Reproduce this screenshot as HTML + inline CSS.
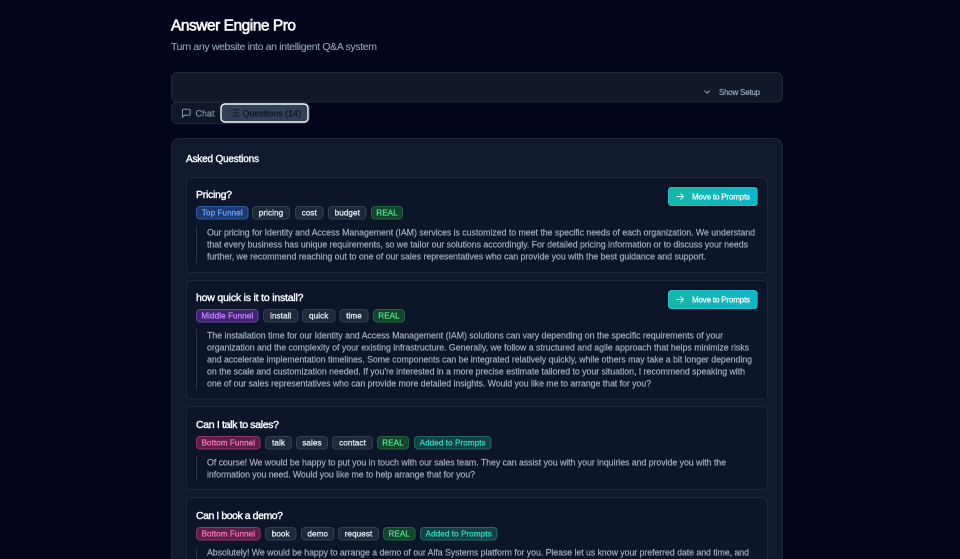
<!DOCTYPE html>
<html lang="en"><head><meta charset="utf-8"><title>Answer Engine Pro</title>
<style>
html,body{margin:0;padding:0;background:#01041a;width:960px;height:559px;overflow:hidden}
svg{display:block;font-family:"Liberation Sans",sans-serif}
.a{font-size:8.8px;fill:#a6b1c4;stroke:#a6b1c4;stroke-width:.16px}
.q{font-size:10.5px;fill:#f8fafc;stroke:#f8fafc;stroke-width:.4px}
.t{font-size:8.1px;text-anchor:middle;letter-spacing:.08px;stroke-width:.3px}
.g{fill:#1e293b;stroke:#334155;rx:3.5px}
.gt{fill:#e2e8f0;stroke:#e2e8f0}
.real{fill:#14432f;stroke:#22633f;rx:3.5px}.realt{fill:#4ade80;stroke:#4ade80}
.add{fill:#134045;stroke:#1f6a68;rx:3.5px}.addt{fill:#2dd4bf;stroke:#2dd4bf}
.top{fill:#1e3a6e;stroke:#2f5aa8;rx:3.5px}.topt{fill:#60a5fa;stroke:#60a5fa}
.mid{fill:#3f2470;stroke:#6b3fb0;rx:3.5px}.midt{fill:#c084fc;stroke:#c084fc}
.bot{fill:#5c1f4a;stroke:#93306f;rx:3.5px}.bott{fill:#f472b6;stroke:#f472b6}
.card{fill:#0d1528;stroke:#1e293b}
.b{font-size:8px;fill:#f0fdfa;stroke:#f0fdfa;stroke-width:.3px}
</style></head><body>
<svg width="960" height="559" viewBox="0 0 960 559" xmlns="http://www.w3.org/2000/svg">
<defs><linearGradient id="tg" x1="0" y1="0" x2="1" y2="0"><stop offset="0" stop-color="#14b8a6"/><stop offset="1" stop-color="#0fb5c9"/></linearGradient></defs>
<rect width="960" height="559" fill="#01041a"/>
<text x="171" y="30.500" font-size="15.500" fill="#fff" stroke="#fff" stroke-width=".6" textLength="125" lengthAdjust="spacing">Answer Engine Pro</text>
<text x="171" y="50" font-size="10.500" fill="#94a3b8" stroke="#94a3b8" stroke-width=".1" textLength="206" lengthAdjust="spacing">Turn any website into an intelligent Q&amp;A system</text>

<rect x="171.500" y="72.500" width="611" height="29.500" rx="6" fill="#111827" stroke="#1f2a3c"/>
<path d="M704.500 90.500l2.700 2.700 2.700-2.700" fill="none" stroke="#94a3b8" stroke-width="1"/>
<text x="719" y="95" font-size="8" fill="#94a3b8" stroke="#94a3b8" stroke-width=".25" textLength="41" lengthAdjust="spacing">Show Setup</text>

<rect x="171.500" y="102.500" width="138" height="21" rx="5" fill="#0f1729" stroke="#1e293b"/>
<path d="M182.500 110.200a1 1 0 0 1 1-1h5.600a1 1 0 0 1 1 1v4a1 1 0 0 1-1 1h-4.400l-2.200 1.800z" fill="none" stroke="#94a3b8" stroke-width=".9"/>
<text x="195.500" y="116.500" font-size="8.800" fill="#7f8ca1" stroke="#7f8ca1" stroke-width=".25" textLength="19" lengthAdjust="spacing">Chat</text>
<rect x="221" y="104" width="87" height="18" rx="4" fill="#334155" stroke="#f8fafc" stroke-width="1.400"/>
<path d="M232.500 110h6.500M232.500 113h6.500M232.500 116h6.500" stroke="#0f172a" stroke-width=".9"/>
<path d="M229.500 110h1M229.500 113h1M229.500 116h1" stroke="#0f172a" stroke-width=".9"/>
<text x="242.500" y="116.500" font-size="8.800" fill="#0f172a" stroke="#0f172a" stroke-width=".3" textLength="58.500" lengthAdjust="spacing">Questions (14)</text>

<path d="M171.500 559V146.500a8 8 0 0 1 8-8h595a8 8 0 0 1 8 8V559" fill="#111a2c" stroke="#1f2a3c"/>
<text x="186" y="162" font-size="10" fill="#f8fafc" stroke="#f8fafc" stroke-width=".4" textLength="73" lengthAdjust="spacing">Asked Questions</text>

<!-- Card 1 -->
<rect x="186.500" y="177.500" width="581" height="95" rx="4" class="card"/>
<text x="196" y="198" class="q" textLength="36" lengthAdjust="spacing">Pricing?</text>
<rect x="196.500" y="206.500" width="51.500" height="12.500" rx="3" class="top"/><text x="222.300" y="215.700" class="t topt">Top Funnel</text>
<rect x="252.500" y="206.500" width="37" height="12.500" rx="3" class="g"/><text x="271" y="215.700" class="t gt">pricing</text>
<rect x="295.500" y="206.500" width="27.500" height="12.500" rx="3" class="g"/><text x="309.300" y="215.700" class="t gt">cost</text>
<rect x="328.500" y="206.500" width="37.500" height="12.500" rx="3" class="g"/><text x="347.300" y="215.700" class="t gt">budget</text>
<rect x="371.500" y="206.500" width="31" height="12.500" rx="3" class="real"/><text x="387" y="215.700" class="t realt">REAL</text>
<rect x="666.800" y="185.800" width="92" height="21.400" rx="4" fill="#060b1c"/>
<rect x="668.300" y="187.300" width="89" height="18.400" rx="3" fill="url(#tg)" stroke="#22c3d8" stroke-width=".7"/>
<path d="M676.500 196.500h7M680.500 193.500l3 3-3 3" fill="none" stroke="#f0fdfa" stroke-width="1"/>
<text x="692" y="199.500" class="b" textLength="58" lengthAdjust="spacing">Move to Prompts</text>
<rect x="196" y="226" width="1" height="37" fill="#2b3648"/>
<text x="207" y="235.500" class="a" textLength="548" lengthAdjust="spacing">Our pricing for Identity and Access Management (IAM) services is customized to meet the specific needs of each organization. We understand</text>
<text x="207" y="247.500" class="a" textLength="541" lengthAdjust="spacing">that every business has unique requirements, so we tailor our solutions accordingly. For detailed pricing information or to discuss your needs</text>
<text x="207" y="259.500" class="a" textLength="499" lengthAdjust="spacing">further, we recommend reaching out to one of our sales representatives who can provide you with the best guidance and support.</text>

<!-- Card 2 -->
<rect x="186.500" y="280.500" width="581" height="118.500" rx="4" class="card"/>
<text x="196" y="301" class="q" textLength="107.500" lengthAdjust="spacing">how quick is it to install?</text>
<rect x="196.500" y="309.500" width="61.500" height="12.500" rx="3" class="mid"/><text x="227.300" y="318.700" class="t midt">Middle Funnel</text>
<rect x="263.500" y="309.500" width="34.500" height="12.500" rx="3" class="g"/><text x="280.700" y="318.700" class="t gt">install</text>
<rect x="302.500" y="309.500" width="32.500" height="12.500" rx="3" class="g"/><text x="318.700" y="318.700" class="t gt">quick</text>
<rect x="340" y="309.500" width="28" height="12.500" rx="3" class="g"/><text x="354" y="318.700" class="t gt">time</text>
<rect x="373.500" y="309.500" width="31" height="12.500" rx="3" class="real"/><text x="389" y="318.700" class="t realt">REAL</text>
<rect x="666.800" y="288.800" width="92" height="21.400" rx="4" fill="#060b1c"/>
<rect x="668.300" y="290.300" width="89" height="18.400" rx="3" fill="url(#tg)" stroke="#22c3d8" stroke-width=".7"/>
<path d="M676.500 299.500h7M680.500 296.500l3 3-3 3" fill="none" stroke="#f0fdfa" stroke-width="1"/>
<text x="692" y="302.500" class="b" textLength="58" lengthAdjust="spacing">Move to Prompts</text>
<rect x="196" y="329" width="1" height="61" fill="#2b3648"/>
<text x="207" y="338.500" class="a" textLength="516" lengthAdjust="spacing">The installation time for our Identity and Access Management (IAM) solutions can vary depending on the specific requirements of your</text>
<text x="207" y="350.500" class="a" textLength="542" lengthAdjust="spacing">organization and the complexity of your existing infrastructure. Generally, we follow a structured and agile approach that helps minimize risks</text>
<text x="207" y="362.500" class="a" textLength="545" lengthAdjust="spacing">and accelerate implementation timelines. Some components can be integrated relatively quickly, while others may take a bit longer depending</text>
<text x="207" y="374.500" class="a" textLength="538" lengthAdjust="spacing">on the scale and customization needed. If you're interested in a more precise estimate tailored to your situation, I recommend speaking with</text>
<text x="207" y="386.500" class="a" textLength="444" lengthAdjust="spacing">one of our sales representatives who can provide more detailed insights. Would you like me to arrange that for you?</text>

<!-- Card 3 -->
<rect x="186.500" y="406.500" width="581" height="83" rx="4" class="card"/>
<text x="196" y="428" class="q" textLength="83" lengthAdjust="spacing">Can I talk to sales?</text>
<rect x="196.500" y="436.500" width="63.500" height="12.500" rx="3" class="bot"/><text x="228.300" y="445.700" class="t bott">Bottom Funnel</text>
<rect x="265.500" y="436.500" width="26" height="12.500" rx="3" class="g"/><text x="278.500" y="445.700" class="t gt">talk</text>
<rect x="296.500" y="436.500" width="31" height="12.500" rx="3" class="g"/><text x="312" y="445.700" class="t gt">sales</text>
<rect x="332.500" y="436.500" width="40" height="12.500" rx="3" class="g"/><text x="352.500" y="445.700" class="t gt">contact</text>
<rect x="377.500" y="436.500" width="31" height="12.500" rx="3" class="real"/><text x="393" y="445.700" class="t realt">REAL</text>
<rect x="414.500" y="436.500" width="76.500" height="12.500" rx="3" class="add"/><text x="452.700" y="445.700" class="t addt">Added to Prompts</text>
<rect x="196" y="456" width="1" height="24" fill="#2b3648"/>
<text x="207" y="465.500" class="a" textLength="519" lengthAdjust="spacing">Of course! We would be happy to put you in touch with our sales team. They can assist you with your inquiries and provide you with the</text>
<text x="207" y="477.500" class="a" textLength="268" lengthAdjust="spacing">information you need. Would you like me to help arrange that for you?</text>

<!-- Card 4 -->
<path d="M186.500 559V501.500a4 4 0 0 1 4-4h573a4 4 0 0 1 4 4V559" class="card"/>
<text x="196" y="519" class="q" textLength="87" lengthAdjust="spacing">Can I book a demo?</text>
<rect x="196.500" y="527.500" width="63.500" height="12.500" rx="3" class="bot"/><text x="228.300" y="536.700" class="t bott">Bottom Funnel</text>
<rect x="265.500" y="527.500" width="30.500" height="12.500" rx="3" class="g"/><text x="280.700" y="536.700" class="t gt">book</text>
<rect x="301.500" y="527.500" width="32.500" height="12.500" rx="3" class="g"/><text x="317.700" y="536.700" class="t gt">demo</text>
<rect x="338.500" y="527.500" width="40" height="12.500" rx="3" class="g"/><text x="358.500" y="536.700" class="t gt">request</text>
<rect x="383.500" y="527.500" width="31.500" height="12.500" rx="3" class="real"/><text x="399.200" y="536.700" class="t realt">REAL</text>
<rect x="420.500" y="527.500" width="76.500" height="12.500" rx="3" class="add"/><text x="458.700" y="536.700" class="t addt">Added to Prompts</text>
<rect x="196" y="548" width="1" height="11" fill="#2b3648"/>
<text x="207" y="555.500" class="a" textLength="542" lengthAdjust="spacing">Absolutely! We would be happy to arrange a demo of our Alfa Systems platform for you. Please let us know your preferred date and time, and</text>
</svg>
</body></html>
